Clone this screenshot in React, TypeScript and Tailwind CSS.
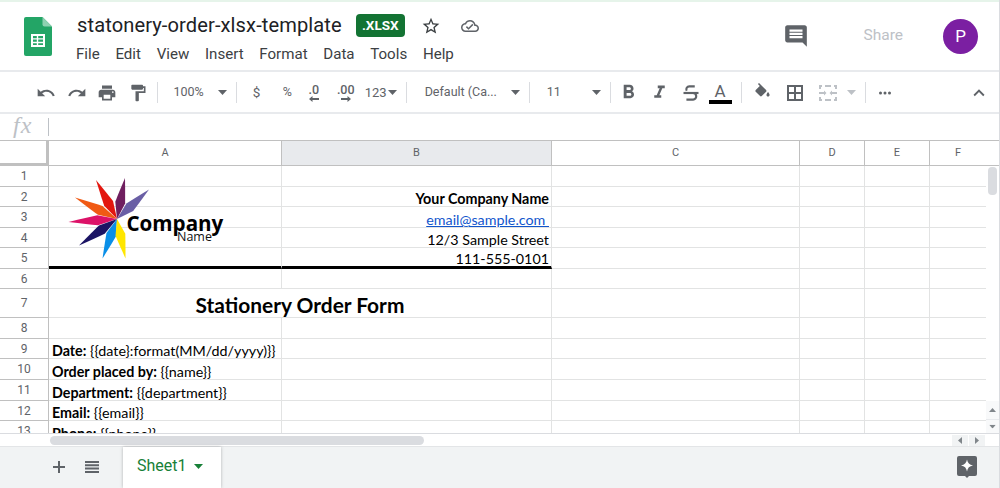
import type { ReactNode } from "react";

const ui = "font-['Roboto',sans-serif]";
const sheetFont = "font-['Lato','Noto_Sans',sans-serif]";

const menus = ["File", "Edit", "View", "Insert", "Format", "Data", "Tools", "Help"];
const columns = ["A", "B", "C", "D", "E", "F"];

// undo, redo etc are the material icon paths
const paths = {
    undo: "M12.5 8c-2.65 0-5.05.99-6.9 2.6L2 7v9h9l-3.62-3.62c1.39-1.16 3.16-1.88 5.12-1.88 3.54 0 6.55 2.31 7.6 5.5l2.37-.78C21.08 11.03 17.15 8 12.5 8z",
    redo: "M18.4 10.6C16.55 8.99 14.15 8 11.5 8c-4.65 0-8.58 3.03-9.96 7.22L3.9 16c1.05-3.19 4.05-5.5 7.6-5.5 1.95 0 3.73.72 5.12 1.88L13 16h9V7l-3.6 3.6z",
    print: "M19 8H5c-1.66 0-3 1.34-3 3v6h4v4h12v-4h4v-6c0-1.66-1.34-3-3-3zm-3 11H8v-5h8v5zm3-7c-.55 0-1-.45-1-1s.45-1 1-1 1 .45 1 1-.45 1-1 1zm-1-9H6v4h12V3z",
    paint: "M18 4V3c0-.55-.45-1-1-1H5c-.55 0-1 .45-1 1v4c0 .55.45 1 1 1h12c.55 0 1-.45 1-1V6h1v4H9v11c0 .55.45 1 1 1h2c.55 0 1-.45 1-1v-9h8V4h-3z",
    bold: "M15.6 10.79c.97-.67 1.65-1.77 1.65-2.79 0-2.26-1.75-4-4-4H7v14h7.04c2.09 0 3.71-1.7 3.71-3.79 0-1.52-.86-2.82-2.15-3.42zM10 6.5h3c.83 0 1.5.67 1.5 1.5s-.67 1.5-1.5 1.5h-3v-3zm3.5 9H10v-3h3.5c.83 0 1.5.67 1.5 1.5s-.67 1.5-1.5 1.5z",
    italic: "M10 4v3h2.21l-3.42 8H6v3h8v-3h-2.21l3.42-8H18V4z",
    fill: "M16.56 8.94L7.62 0 6.21 1.41l2.38 2.38-5.15 5.15c-.59.59-.59 1.54 0 2.12l5.5 5.5c.29.29.68.44 1.06.44s.77-.15 1.06-.44l5.5-5.5c.59-.58.59-1.53 0-2.12zM19 11.5s-2 2.17-2 3.5c0 1.1.9 2 2 2s2-.9 2-2c0-1.33-2-3.5-2-3.5z",
    comment: "M20 2H4c-1.1 0-1.99.9-1.99 2L2 16c0 1.1.9 2 2 2h14l4 4V4c0-1.1-.9-2-2-2zm-2 12H6v-2h12v2zm0-3H6V9h12v2zm0-3H6V6h12v2z",
    star: "M22 9.24l-7.19-.62L12 2 9.19 8.63 2 9.24l5.46 4.73L5.82 21 12 17.27 18.18 21l-1.63-7.03L22 9.24zM12 15.4l-3.76 2.27 1-4.28-3.32-2.88 4.38-.38L12 6.1l1.71 4.04 4.38.38-3.32 2.88 1 4.28L12 15.4z",
    cloud: "M19.35 10.04C18.67 6.59 15.64 4 12 4 9.11 4 6.6 5.64 5.35 8.04 2.34 8.36 0 10.91 0 14c0 3.31 2.69 6 6 6h13c2.76 0 5-2.24 5-5 0-2.64-2.05-4.78-4.65-4.96zM19 18H6c-2.21 0-4-1.79-4-4 0-2.05 1.53-3.76 3.56-3.97l1.07-.11.5-.95C8.08 7.14 9.94 6 12 6c2.62 0 4.88 1.86 5.39 4.43l.3 1.5 1.53.11c1.56.1 2.78 1.41 2.78 2.96 0 1.65-1.35 3-3 3zM10 14.2l-2.1-2.1-1.4 1.4L10 17l6.5-6.5-1.4-1.4z",
    more: "M6 10a2 2 0 100 4 2 2 0 000-4zm6 0a2 2 0 100 4 2 2 0 000-4zm6 0a2 2 0 100 4 2 2 0 000-4z",
    collapse: "M12 8l-6 6 1.41 1.41L12 10.83l4.59 4.58L18 14z",
};

function Icon({ d, className }: { d: string; className: string }) {
    return (
        <svg viewBox="0 0 24 24" fill="currentColor" className={className}>
            <path d={d} />
        </svg>
    );
}

function Caret({ className = "text-[#5f6368]" }: { className?: string }) {
    return (
        <svg viewBox="0 0 9 5" fill="currentColor" className={`w-[9px] h-[5px] shrink-0 ${className}`}>
            <path d="M0 0h9L4.5 5z" />
        </svg>
    );
}

function Sep({ className }: { className: string }) {
    return <div className={`w-px h-[21px] shrink-0 bg-[#dadce0] ${className}`} />;
}

function Slot({ d }: { d: string }) {
    return (
        <div className="w-[30.5px] flex justify-center shrink-0 text-[#5f6368]">
            <Icon d={d} className="w-5 h-5" />
        </div>
    );
}

function DecimalArrow({ dir }: { dir: "left" | "right" }) {
    return (
        <svg viewBox="0 0 10 6" className="w-[10px] h-[6px]" fill="#5f6368">
            {dir === "left" ? <path d="M0 3l3.5-3v2H10v2H3.5v2z" /> : <path d="M10 3L6.5 0v2H0v2h6.5v2z" />}
        </svg>
    );
}

function SheetsLogo() {
    return (
        <svg viewBox="0 0 28 39" className="w-7 h-[39px] shrink-0">
            <path d="M2 0h16.5L28 9.5V37a2 2 0 0 1-2 2H2a2 2 0 0 1-2-2V2a2 2 0 0 1 2-2z" fill="#23a566" />
            <path d="M18.5 0L28 9.5h-7.5a2 2 0 0 1-2-2z" fill="#8ed1b1" />
            <path d="M7 17h14v13H7z" fill="#fff" />
            <path d="M9 19v2.2h3.8V19zm5.2 0v2.2H19V19zM9 22.6v2.2h3.8v-2.2zm5.2 0v2.2H19v-2.2zM9 26.2V28h3.8v-1.8zm5.2 0V28H19v-1.8z" fill="#23a566" />
        </svg>
    );
}

function petal(tx: number, ty: number, w: number) {
    const cx = 117;
    const cy = 219;
    const dx = tx - cx;
    const dy = ty - cy;
    const len = Math.hypot(dx, dy);
    const nx = (-dy / len) * w;
    const ny = (dx / len) * w;
    const mx = cx + dx * 0.4;
    const my = cy + dy * 0.4;
    return `M${cx} ${cy}L${mx + nx} ${my + ny}Q${mx + dx * 0.2 + nx * 0.7} ${my + dy * 0.2 + ny * 0.7} ${tx} ${ty}Q${mx + dx * 0.2 - nx * 0.7} ${my + dy * 0.2 - ny * 0.7} ${mx - nx} ${my - ny}z`;
}

const petals = [
    { tip: [96, 180], color: "#e3170f" },
    { tip: [75, 197.5], color: "#f05a14" },
    { tip: [68.5, 222], color: "#dc1268" },
    { tip: [79, 245.5], color: "#1b1464" },
    { tip: [102.5, 258.5], color: "#0a8fe8" },
    { tip: [125.5, 258.5], color: "#ffe600" },
    { tip: [125, 178], color: "#6f1f5f" },
    { tip: [149, 189.5], color: "#6a5fa5" },
];

function CompanyLogo() {
    return (
        <svg viewBox="60 170 180 95" className="absolute left-[60px] top-[30px] w-[180px] h-[95px]">
            {petals.map((p) => (
                <path key={p.color} d={petal(p.tip[0], p.tip[1], 5)} fill={p.color} />
            ))}
            <text x="126.5" y="231" fontFamily="'Open Sans', sans-serif" fontWeight="700" fontSize="20.6" fill="#000">
                Company
            </text>
            <text x="177" y="241" fontFamily="'Open Sans', sans-serif" fontWeight="400" fontSize="12.5" fill="#111">
                Name
            </text>
        </svg>
    );
}

function Field({ label, value }: { label: string; value: string }) {
    return (
        <span className="pl-[3px] whitespace-nowrap">
            <b className="font-bold">{label}</b> {value}
        </span>
    );
}

function Right({ children, bold }: { children: ReactNode; bold?: boolean }) {
    return <span className={`w-full pr-[2px] text-right whitespace-nowrap ${bold ? "font-bold" : ""}`}>{children}</span>;
}

const cellsA: Record<number, ReactNode> = {
    9: <Field label="Date:" value="{{date}:format(MM/dd/yyyy)}}" />,
    10: <Field label="Order placed by:" value="{{name}}" />,
    11: <Field label="Department:" value="{{department}}" />,
    12: <Field label="Email:" value="{{email}}" />,
    13: <Field label="Phone:" value="{{phone}}" />,
};

const cellsB: Record<number, ReactNode> = {
    2: <Right bold>Your Company Name</Right>,
    3: <Right><span className="text-[#1155cc] underline">email@sample.com&nbsp;</span></Right>,
    4: <Right>12/3 Sample Street</Right>,
    5: <Right>111-555-0101</Right>,
};

const rowNumbers = [1, 2, 3, 4, 5, 6, 7, 8, 9, 10, 11, 12, 13];

function Grid() {
    return (
        <div className={`relative flex-1 overflow-hidden grid grid-cols-[49px_233px_270px_248px_65px_65px_57px] grid-rows-[26px_21px_20px_21px_20px_21px_20px_29px_21px_20px_21px_21px_20px_21px] ${sheetFont} text-[14.3px] leading-[14px] text-black`}>
            <div className="border-r-[3px] border-b-[3px] border-[#c0c0c0] border-t border-t-[#c0c0c0]" />
            {columns.map((c) => (
                <div
                    key={c}
                    className={`flex items-center justify-center border-t border-r border-b border-[#c0c0c0] ${ui} text-[11px] text-[#5f6368] ${c === "B" ? "bg-[#e8eaed]" : "bg-white"}`}
                >
                    {c}
                </div>
            ))}
            {rowNumbers.map((n) => {
                const thick = n === 5;
                return [
                    <div key={`h${n}`} className={`flex items-center justify-center border-r border-b border-[#c0c0c0] ${ui} text-[12px] text-[#5f6368]`}>
                        {n}
                    </div>,
                    n === 7 ? (
                        <div key="title" className="col-span-2 flex items-center justify-center pt-1 border-r border-b border-[#e2e3e3] font-bold text-[20.9px] whitespace-nowrap">
                            Stationery Order Form
                        </div>
                    ) : (
                        [
                            <div key={`a${n}`} className={`flex items-end border-r border-[#e2e3e3] ${thick ? "border-b-[3px] border-b-black" : "border-b"}`}>
                                {cellsA[n]}
                            </div>,
                            <div key={`b${n}`} className={`flex items-end border-r border-[#e2e3e3] ${thick ? "border-b-[3px] border-b-black" : "border-b"}`}>
                                {cellsB[n]}
                            </div>,
                        ]
                    ),
                    ...["c", "d", "e", "f"].map((c) => (
                        <div key={`${c}${n}`} className="border-r border-b border-[#e2e3e3]" />
                    )),
                ];
            })}
            <CompanyLogo />
        </div>
    );
}

function VerticalScroll() {
    return (
        <div className="w-[13px] shrink-0 flex flex-col border-t border-[#c0c0c0]">
            <div className="h-[25px] border-b border-[#c0c0c0] shrink-0" />
            <div className="mt-px mx-[2px] h-[28px] rounded-[4px] bg-[#dadce0]" />
            <div className="mt-auto h-[19px] flex items-center justify-center border-b border-[#e8eaed] bg-[#f8f9fa]">
                <svg viewBox="0 0 7 4" className="w-[7px] h-1" fill="#80868b"><path d="M3.5 0L7 4H0z" /></svg>
            </div>
            <div className="h-[13px] flex items-center justify-center bg-[#f8f9fa]">
                <Caret className="text-[#80868b] scale-75" />
            </div>
        </div>
    );
}

function HorizontalScroll() {
    return (
        <div className="h-[13px] shrink-0 flex items-center border-t border-[#dadce0] pl-[50px]">
            <div className="w-[374px] h-[9px] rounded-full bg-[#dadce0]" />
            <div className="ml-auto flex items-center mr-[14px] gap-px">
                <div className="w-4 h-[11px] bg-[#f1f3f4] flex items-center justify-center">
                    <svg viewBox="0 0 4 7" className="w-1 h-[7px]" fill="#80868b"><path d="M0 3.5L4 0v7z" /></svg>
                </div>
                <div className="w-4 h-[11px] bg-[#f1f3f4] flex items-center justify-center">
                    <svg viewBox="0 0 4 7" className="w-1 h-[7px]" fill="#80868b"><path d="M4 3.5L0 0v7z" /></svg>
                </div>
            </div>
        </div>
    );
}

export default function App() {
    return (
        <div className={`w-[1000px] h-[488px] overflow-hidden flex flex-col bg-white border-r border-[#dadce0] ${ui}`}>
            <header className="h-[72px] shrink-0 flex border-t-2 border-t-[#e6f4ea] border-b-2 border-b-[#e8eaed] pl-6">
                <div className="pt-[15px]"><SheetsLogo /></div>
                <div className="ml-[25px] pt-[12px] flex flex-col">
                    <div className="flex items-center h-[23px]">
                        <span className="text-[20.1px] tracking-[0.1px] text-[#202124]">statonery-order-xlsx-template</span>
                        <span className="ml-[14px] w-[49px] h-[23px] rounded-[4px] bg-[#137333] text-white text-[13.5px] font-bold flex items-center justify-center">.XLSX</span>
                        <Icon d={paths.star} className="ml-[16px] w-5 h-5 text-[#3c4043]" />
                        <Icon d={paths.cloud} className="ml-[20px] w-[18px] h-[18px] text-[#5f6368]" />
                    </div>
                    <nav className="flex gap-[15.7px] -ml-px mt-[6px] text-[15.1px] text-[#3c4043]">
                        {menus.map((m) => (
                            <span key={m}>{m}</span>
                        ))}
                    </nav>
                </div>
                <div className="ml-auto flex items-start pt-[17px] pr-[21px]">
                    <Icon d={paths.comment} className="mt-[4px] w-[26px] h-[26px] text-[#5f6368]" />
                    <span className="ml-[55px] mt-[5px] text-[15.5px] text-[#bdc1c6]">Share</span>
                    <div className="ml-[40px] w-[35px] h-[35px] rounded-full bg-[#7b1fa2] text-white text-[17px] flex items-center justify-center">P</div>
                </div>
            </header>

            <div className="h-[42px] shrink-0 flex items-center border-b-2 border-[#e8eaed] pl-[31px] pt-px text-[#5f6368]">
                <Slot d={paths.undo} />
                <Slot d={paths.redo} />
                <Slot d={paths.print} />
                <Slot d={paths.paint} />
                <Sep className="ml-[3.5px]" />
                <span className="ml-[16px] -mt-px text-[12.5px]">100%</span>
                <Caret className="ml-[14px] text-[#5f6368]" />
                <Sep className="ml-[9px]" />
                <span className="ml-[16px] w-[10px] text-[13.5px]">$</span>
                <span className="ml-[20px] w-[10px] text-[12.5px]">%</span>
                <div className="ml-[15px] w-[12px] flex flex-col items-center">
                    <span className="text-[12.5px] font-medium leading-[12px]">.0</span>
                    <DecimalArrow dir="left" />
                </div>
                <div className="ml-[17px] w-[18px] flex flex-col items-center">
                    <span className="text-[12.5px] font-medium leading-[12px]">.00</span>
                    <DecimalArrow dir="right" />
                </div>
                <span className="ml-[10px] text-[13px]">123</span>
                <Caret className="ml-[1px]" />
                <Sep className="ml-[9px]" />
                <span className="ml-[18px] w-[86px] text-[12.5px] whitespace-nowrap">Default (Ca...</span>
                <Caret />
                <Sep className="ml-[9px]" />
                <span className="ml-[17px] w-[45px] text-[12.5px]">11</span>
                <Caret />
                <Sep className="ml-[9px]" />
                <Icon d={paths.bold} className="ml-[6px] w-[23px] h-[23px]" />
                <Icon d={paths.italic} className="ml-[9px] w-[21px] h-[21px]" />
                <svg viewBox="0 0 24 24" fill="none" stroke="currentColor" strokeWidth="2.6" className="ml-[11px] w-[20px] h-[20px]">
                    <path d="M16.5 4H10a3.6 3.6 0 0 0-3.2 5.3" />
                    <path d="M14 12a4 4 0 0 1 .5 8H6.5" />
                    <path d="M3 12h18" />
                </svg>
                <div className="ml-[8px] w-[23px] flex flex-col items-center">
                    <span className="text-[17px] leading-[18px] text-[#5f6368]">A</span>
                    <div className="w-[23px] h-1 bg-black" />
                </div>
                <Sep className="ml-[9px]" />
                <Icon d={paths.fill} className="ml-[11px] w-[19px] h-[19px]" />
                <svg viewBox="0 0 16 16" fill="currentColor" className="ml-[15px] w-4 h-4">
                    <path fillRule="evenodd" d="M0 0h16v16H0zM2 2v5h5V2zM9 2v5h5V2zM2 9v5h5V9zM9 9v5h5V9z" />
                </svg>
                <svg viewBox="0 0 18 16" className="ml-[16px] w-[18px] h-4" fill="#bdc1c6">
                    <path d="M0 0h3v2H2v2H0zM6 0h6v2H6zM15 0h3v4h-2V2h-1zM0 7h2v2H0zM16 7h2v2h-2zM0 12h2v2h1v2H0zM6 14h6v2H6zM16 12h2v4h-3v-2h1z" />
                    <path d="M1 7h4V5.5L7.5 8 5 10.5V9H1zM17 7h-4V5.5L10.5 8l2.5 2.5V9h4z" />
                </svg>
                <Caret className="ml-[10px] text-[#bdc1c6]" />
                <Sep className="ml-[9px]" />
                <Icon d={paths.more} className="ml-[10px] w-[18px] h-[18px]" />
                <Icon d={paths.collapse} className="ml-[74px] w-[22px] h-[22px]" />
            </div>

            <div className="h-[26px] shrink-0 flex items-center pl-[13px]">
                <span className="w-[35px] -mt-[5px] font-['Liberation_Serif',serif] italic text-[24px] tracking-[1px] leading-none text-[#bdc1c6]">fx</span>
                <div className="w-px h-[18px] bg-[#bdc1c6]" />
            </div>

            <div className="h-[293px] shrink-0 flex overflow-hidden">
                <Grid />
                <VerticalScroll />
            </div>

            <HorizontalScroll />

            <footer className="flex-1 flex bg-[#f1f3f4] border-t border-[#e3e5e7] pl-[52px] pr-[22px]">
                <svg viewBox="0 0 14 14" className="mt-[13px] w-[14px] h-[14px]" fill="#5f6368"><path d="M6 1h2v5h5v2H8v5H6V8H1V6h5z" /></svg>
                <svg viewBox="0 0 14 12" className="ml-[19px] mt-[14px] w-[14px] h-3" fill="#5f6368"><path d="M0 0h14v2H0zM0 3.3h14v2H0zM0 6.6h14v2H0zM0 10h14v2H0z" /></svg>
                <div className="ml-[24px] w-[98px] bg-white shadow-[0_0_3px_rgba(60,64,67,0.35)] flex items-start pl-[14px] pt-[7px]">
                    <span className="text-[16px] text-[#188038]">Sheet1</span>
                    <Caret className="ml-[7px] mt-[10px] text-[#188038]" />
                </div>
                <svg viewBox="0 0 20 22" className="ml-auto mt-[9px] w-5 h-[22px]">
                    <path d="M2 0h16a2 2 0 0 1 2 2v16a2 2 0 0 1-2 2h-6l-2 2-2-2H2a2 2 0 0 1-2-2V2a2 2 0 0 1 2-2z" fill="#5f6368" />
                    <path d="M10 3.5c.6 3.6 2.4 5.4 6 6-3.6.6-5.4 2.4-6 6-.6-3.6-2.4-5.4-6-6 3.6-.6 5.4-2.4 6-6z" fill="#fff" />
                </svg>
            </footer>
        </div>
    );
}
